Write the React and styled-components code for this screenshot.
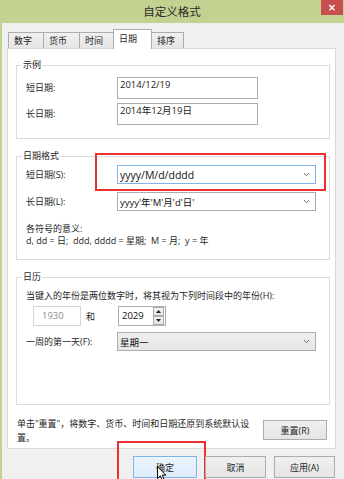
import React from 'react';
import styled, { createGlobalStyle } from 'styled-components';

const GlobalStyle = createGlobalStyle`
  html, body {
    margin: 0;
    padding: 0;
    background: #f0f0f0;
  }
  body {
    font-family: "Open Sans", "Noto Sans CJK SC", sans-serif;
    font-size: 9px;
    color: #1e1e1e;
  }
  * { box-sizing: border-box; }
`;

const Window = styled.div`
  width: 344px;
  height: 479px;
  overflow: hidden;
  background: #f0f0f0;
  box-shadow: inset 2px 0 0 #c3d191;
  display: flex;
  flex-direction: column;
`;

const TitleBar = styled.div`
  flex: none;
  height: 23px;
  background: #c3d191;
  display: grid;
  grid-template-columns: 1fr auto 1fr;
`;

const Title = styled.div`
  grid-column: 2;
  font-family: "Noto Sans CJK SC", sans-serif;
  font-size: 11.5px;
  line-height: 23px;
  color: #2b2b2b;
`;

const CloseBtn = styled.div`
  grid-column: 3;
  justify-self: end;
  width: 22px;
  height: 15px;
  margin-right: 1px;
  background: #c7504f;
  color: #fff;
  font: bold 10px/15px "DejaVu Sans", sans-serif;
  text-align: center;
`;

const TabStrip = styled.div`
  display: flex;
  align-items: flex-end;
  height: 20px;
  margin: 6px 0 -1px 8px;
  position: relative;
  z-index: 1;
`;

const Tab = styled.div`
  width: ${p => p.$w}px;
  height: ${p => (p.$active ? 20 : 16)}px;
  margin-bottom: ${p => (p.$active ? 0 : 1)}px;
  margin-left: -1px;
  &:first-child { margin-left: 0; }
  padding-left: 5px;
  line-height: ${p => (p.$active ? 17 : 15)}px;
  border: 1px solid #acacac;
  border-bottom: none;
  background: ${p => (p.$active ? '#fff' : 'linear-gradient(#f0f0f0, #e5e5e5)')};
  font-family: "Noto Sans CJK SC", sans-serif;
  color: #1e1e1e;
  position: relative;
  z-index: ${p => (p.$active ? 2 : 1)};
`;

const Panel = styled.div`
  margin-left: 7px;
  width: 329px;
  height: 401px;
  border: 1px solid #d9d9d9;
  background: #fff;
  padding: 16px 5px 0 8px;
  display: flex;
  flex-direction: column;
  gap: 17px;
`;

const Group = styled.div`
  position: relative;
  height: ${p => p.$h}px;
  border: 1px solid #dcdcdc;
  padding: ${p => p.$pt}px 0 0 9px;
`;

const Legend = styled.span`
  position: absolute;
  top: -7px;
  left: 5px;
  padding: 0 1px;
  background: #fff;
  line-height: 12px;
  font-family: "Noto Sans CJK SC", sans-serif;
`;

const FieldRow = styled.div`
  display: grid;
  grid-template-columns: 91px auto;
  align-items: center;
  margin-top: ${p => p.$mt || 0}px;
`;

const Label = styled.span`
  line-height: 12px;
`;

const SampleBox = styled.div`
  width: 141px;
  height: 22px;
  border: 1px solid #abadb3;
  padding: 1px 2px;
  line-height: 12px;
  font-size: 9.5px;
  color: #222;
`;

const ComboWrap = styled.div`
  position: relative;
  width: 199px;
  &::after {
    content: ${p => (p.$marked ? "''" : 'none')};
    position: absolute;
    left: -22px;
    top: -12px;
    right: -10px;
    bottom: -7px;
    border: 2px solid #ec2f2f;
    pointer-events: none;
  }
`;

const Combo = styled.div`
  display: flex;
  align-items: center;
  justify-content: space-between;
  height: 19px;
  padding: 0 5px 0 2px;
  border: 1px solid ${p => (p.$focus ? '#7eb4ea' : p.$flat ? '#acacac' : '#abadb3')};
  background: ${p => (p.$flat ? 'linear-gradient(#f0f0f0, #e5e5e5)' : '#fff')};
  font-size: ${p => (p.$big ? 10.5 : 9.5)}px;
  color: #111;
  white-space: nowrap;
`;

const Chevron = () => (
  <svg width="7" height="5" viewBox="0 0 7 5">
    <path d="M1 1.2 L3.5 3.6 L6 1.2" fill="none" stroke="#666" strokeWidth="1" />
  </svg>
);

const Note = styled.div`
  margin-top: ${p => p.$mt || 0}px;
  line-height: 12px;
  white-space: nowrap;
`;

const YearRow = styled.div`
  display: flex;
  align-items: center;
  margin-top: 4px;
  padding-left: 7px;
`;

const YearBox = styled.div`
  width: ${p => p.$w}px;
  height: 20px;
  border: 1px solid ${p => (p.$disabled ? '#d5d5d5' : '#abadb3')};
  color: ${p => (p.$disabled ? '#8c8c8c' : '#111')};
  font-size: 9.5px;
  line-height: 16px;
  padding: 1px 0 0 ${p => (p.$disabled ? 8 : 3)}px;
  display: flex;
  justify-content: space-between;
  background: #fff;
`;

const And = styled.span`
  width: 37px;
  padding-left: 5px;
  font-family: "Noto Sans CJK SC", sans-serif;
`;

const Spin = styled.div`
  display: flex;
  flex-direction: column;
  margin: -1px 1px 0 0;
`;

const SpinBtn = styled.div`
  width: 11px;
  height: 9px;
  border: 1px solid #acacac;
  background: linear-gradient(#f4f4f4, #e3e3e3);
  display: flex;
  align-items: center;
  justify-content: center;
`;

const Footer = styled.div`
  display: flex;
  justify-content: space-between;
  align-items: flex-start;
  margin-top: -5px;
  padding: 0 3px 0 1px;
`;

const FooterText = styled.div`
  width: 240px;
  line-height: 14px;
  white-space: nowrap;
`;

const Button = styled.div`
  position: relative;
  width: ${p => p.$w}px;
  height: ${p => p.$h}px;
  margin-top: ${p => p.$mt || 0}px;
  border: 1px solid ${p => (p.$default ? '#7eb4ea' : '#acacac')};
  background: ${p => (p.$default ? 'linear-gradient(#ecf4fc, #dcecfc)' : 'linear-gradient(#f0f0f0, #e5e5e5)')};
  display: flex;
  align-items: center;
  justify-content: center;
  color: #1e1e1e;
  &::after {
    content: ${p => (p.$marked ? "''" : 'none')};
    position: absolute;
    left: -17px;
    top: -16px;
    right: -10px;
    bottom: -12px;
    border: 2px solid #ec2f2f;
    pointer-events: none;
  }
`;

const Buttons = styled.div`
  display: flex;
  justify-content: flex-end;
  gap: 8px;
  margin-top: 7px;
  padding-right: 9px;
`;

const Cursor = styled.svg`
  position: absolute;
  left: 23px;
  top: 9px;
`;

const tabs = [
  { name: '数字', w: 36 },
  { name: '货币', w: 37 },
  { name: '时间', w: 35 },
  { name: '日期', w: 39, active: true },
  { name: '排序', w: 33 },
];

const Arrow = ({ up }) => (
  <svg width="5" height="3" viewBox="0 0 5 3">
    <path d={up ? 'M0 3 L2.5 0 L5 3 Z' : 'M0 0 L2.5 3 L5 0 Z'} fill="#222" />
  </svg>
);

export default function App() {
  return (
    <>
      <GlobalStyle />
      <Window>
        <TitleBar>
          <Title>自定义格式</Title>
          <CloseBtn>×</CloseBtn>
        </TitleBar>

        <TabStrip>
          {tabs.map(t => (
            <Tab key={t.name} $w={t.w} $active={t.active}>
              {t.name}
            </Tab>
          ))}
        </TabStrip>

        <Panel>
          <Group $h={74} $pt={11}>
            <Legend>示例</Legend>
            <FieldRow>
              <Label>短日期:</Label>
              <SampleBox>2014/12/19</SampleBox>
            </FieldRow>
            <FieldRow $mt={4}>
              <Label>长日期:</Label>
              <SampleBox>2014年12月19日</SampleBox>
            </FieldRow>
          </Group>

          <Group $h={104} $pt={8}>
            <Legend>日期格式</Legend>
            <FieldRow>
              <Label>短日期(S):</Label>
              <ComboWrap $marked>
                <Combo $focus $big>
                  yyyy/M/d/dddd
                  <Chevron />
                </Combo>
              </ComboWrap>
            </FieldRow>
            <FieldRow $mt={8}>
              <Label>长日期(L):</Label>
              <ComboWrap>
                <Combo>
                  yyyy'年'M'月'd'日'
                  <Chevron />
                </Combo>
              </ComboWrap>
            </FieldRow>
            <Note $mt={12}>各符号的意义:</Note>
            <Note>d, dd = 日;&nbsp; ddd, dddd = 星期;&nbsp; M = 月;&nbsp; y = 年</Note>
          </Group>

          <Group $h={128} $pt={12}>
            <Legend>日历</Legend>
            <Note>当键入的年份是两位数字时，将其视为下列时间段中的年份(H):</Note>
            <YearRow>
              <YearBox $w={48} $disabled>1930</YearBox>
              <And>和</And>
              <YearBox $w={48}>
                2029
                <Spin>
                  <SpinBtn><Arrow up /></SpinBtn>
                  <SpinBtn><Arrow /></SpinBtn>
                </Spin>
              </YearBox>
            </YearRow>
            <FieldRow $mt={6}>
              <Label>一周的第一天(F):</Label>
              <ComboWrap>
                <Combo $flat>
                  星期一
                  <Chevron />
                </Combo>
              </ComboWrap>
            </FieldRow>
          </Group>

          <Footer>
            <FooterText>
              单击"重置"，将数字、货币、时间和日期还原到系统默认设
              <br />
              置。
            </FooterText>
            <Button $w={64} $h={20} $mt={3}>重置(R)</Button>
          </Footer>
        </Panel>

        <Buttons>
          <Button $w={64} $h={22} $default $marked>
            确定
            <Cursor width="10" height="16" viewBox="0 0 10 16">
              <path
                d="M0.5 0.5 L0.5 12.5 L3.3 9.8 L5.4 14.6 L7.2 13.8 L5.2 9.2 L8.8 9.2 Z"
                fill="#fff"
                stroke="#000"
                strokeWidth="1"
                strokeLinejoin="round"
              />
            </Cursor>
          </Button>
          <Button $w={61} $h={22}>取消</Button>
          <Button $w={61} $h={22}>应用(A)</Button>
        </Buttons>
      </Window>
    </>
  );
}
